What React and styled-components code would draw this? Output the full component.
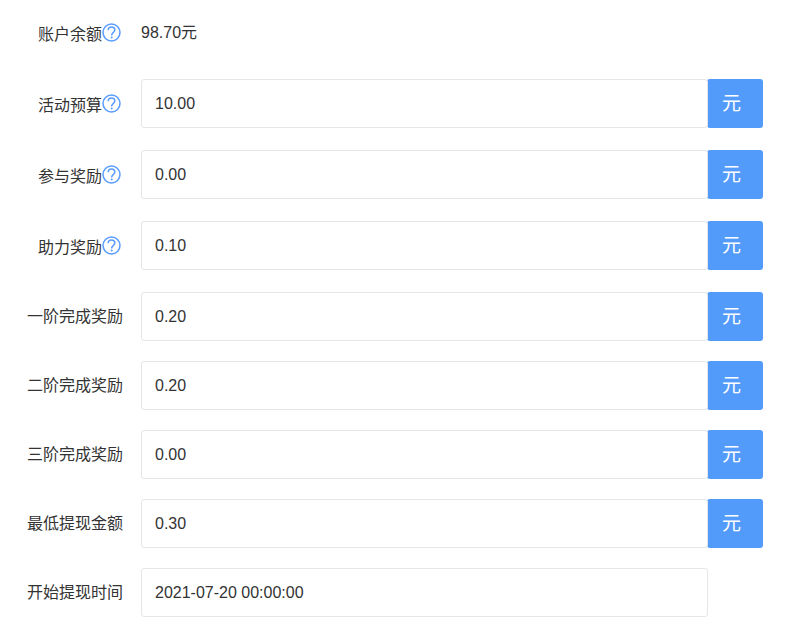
import React, { useState } from "react";
import styled, { createGlobalStyle } from "styled-components";

const GlobalStyle = createGlobalStyle`
  * {
    box-sizing: border-box;
  }
  body {
    margin: 0;
    background: #fff;
    color: #333;
    font-family: "Liberation Sans", "Noto Sans CJK SC", sans-serif;
    font-size: 16px;
    line-height: 24px;
  }
`;

const Form = styled.form`
  display: flex;
  flex-direction: column;
  gap: 20px;
  padding: 8px 31px 16px 0;
`;

const Row = styled.div`
  display: grid;
  grid-template-columns: 123px minmax(0, 1fr) 55px;
  align-items: start;
  min-height: ${props => (props.$tip ? "51px" : "49px")};
`;

const LabelCell = styled.div`
  display: flex;
  justify-content: flex-end;
  align-items: center;
  height: 49px;
  padding-right: ${props => (props.$tip ? "2px" : "0")};
  white-space: nowrap;
`;

const Label = styled.label`
  padding-top: ${props => (props.$tip ? "4px" : "0")};
`;

const TipButton = styled.button`
  display: flex;
  padding: 0;
  border: 0;
  background: none;
  color: #5a9cff;
  cursor: pointer;
`;

const Balance = styled.output`
  margin-left: 18px;
  line-height: 50px;
`;

const Input = styled.input`
  position: relative;
  z-index: 1;
  height: 49px;
  margin-left: 18px;
  padding: 0 13px;
  border: 1px solid #e6e6e6;
  border-radius: 3px;
  background: #fff;
  color: #333;
  font: inherit;
  outline: none;

  &:focus {
    border-color: #c9c9c9;
  }
`;

const Unit = styled.button`
  height: 49px;
  margin-left: -1px;
  padding: 0 22px 0 15px;
  border: 0;
  border-radius: 3px;
  background: #539bfb;
  color: #fff;
  font: inherit;
  font-size: 19px;
  text-align: left;
`;

const fields = [
  { name: "budget", label: "活动预算", value: "10.00", unit: "元", tip: true },
  { name: "join", label: "参与奖励", value: "0.00", unit: "元", tip: true },
  { name: "assist", label: "助力奖励", value: "0.10", unit: "元", tip: true },
  { name: "first", label: "一阶完成奖励", value: "0.20", unit: "元" },
  { name: "second", label: "二阶完成奖励", value: "0.20", unit: "元" },
  { name: "third", label: "三阶完成奖励", value: "0.00", unit: "元" },
  { name: "minimum", label: "最低提现金额", value: "0.30", unit: "元" },
  { name: "start", label: "开始提现时间", value: "2021-07-20 00:00:00" }
];

function Tip({ label }) {
  return (
    <TipButton type="button" aria-label={`${label}说明`}>
      <svg width="19" height="19" viewBox="0 0 19 19" fill="none">
        <circle cx="9.5" cy="9.5" r="8.5" stroke="currentColor" strokeWidth="1.5" />
        <path
          d="M6.2 7.3C6.2 5.3 7.6 4.1 9.5 4.1s3.3 1.2 3.3 3c0 2.3-3.1 2.6-3.1 4.8v.5"
          stroke="currentColor"
          strokeWidth="1.5"
        />
        <circle cx="9.7" cy="14.4" r="1" fill="currentColor" />
      </svg>
    </TipButton>
  );
}

function FieldLabel({ id, label, tip }) {
  return (
    <LabelCell $tip={tip}>
      <Label htmlFor={id} $tip={tip}>
        {label}
      </Label>
      {tip && <Tip label={label} />}
    </LabelCell>
  );
}

function App() {
  const [values, setValues] = useState(
    Object.fromEntries(fields.map(field => [field.name, field.value]))
  );

  const handleChange = e => {
    const { name, value } = e.target;
    setValues(prev => ({ ...prev, [name]: value }));
  };

  return (
    <>
      <GlobalStyle />
      <Form>
        <Row $tip>
          <FieldLabel id="balance" label="账户余额" tip />
          <Balance id="balance">98.70元</Balance>
        </Row>
        {fields.map(field => (
          <Row key={field.name} $tip={field.tip}>
            <FieldLabel id={field.name} label={field.label} tip={field.tip} />
            <Input
              id={field.name}
              name={field.name}
              type="text"
              autoComplete="off"
              value={values[field.name]}
              onChange={handleChange}
            />
            {field.unit && <Unit type="button">{field.unit}</Unit>}
          </Row>
        ))}
      </Form>
    </>
  );
}

export default App;
